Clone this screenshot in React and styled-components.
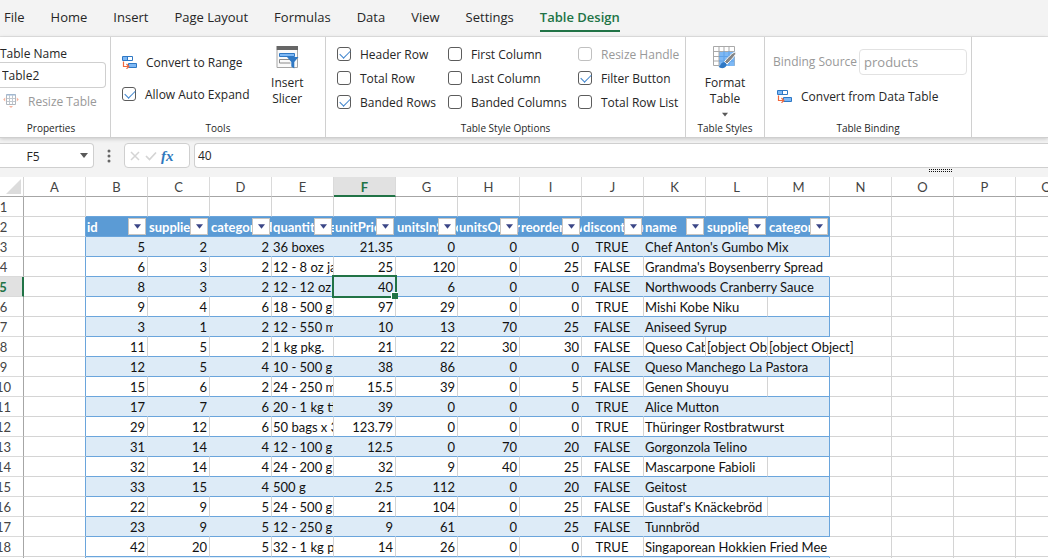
import styled, { createGlobalStyle, css } from "styled-components";

const GlobalStyle = createGlobalStyle`
  * {
    box-sizing: border-box;
  }
  body {
    margin: 0;
    overflow: hidden;
    color: #262626;
    background: #f3f3f3;
    font-family: "Open Sans", "Noto Sans", sans-serif;
    font-size: 12px;
  }
  button,
  input {
    margin: 0;
    color: inherit;
    font-family: inherit;
    font-size: inherit;
  }
`;

const Page = styled.div`
  display: flex;
  flex-direction: column;
  height: 100vh;
  overflow: hidden;
`;

const TabBar = styled.nav`
  display: flex;
  gap: 26px;
  height: 37px;
  padding: 4px 4px 0;
  border-bottom: 1px solid #e2e2e2;
`;

const Tab = styled.button`
  height: 28px;
  padding: 0;
  border: 0;
  border-bottom: 2px solid ${({ $active }) => ($active ? "#217346" : "transparent")};
  background: none;
  color: ${({ $active }) => ($active ? "#217346" : "#262626")};
  font-size: 13px;
  font-weight: ${({ $active }) => ($active ? 600 : 400)};
  line-height: 26px;
  white-space: nowrap;
`;

const Ribbon = styled.div`
  display: flex;
  flex: none;
  height: 101px;
  background: #fff;
  border-bottom: 1px solid #cfcfcf;
  box-shadow: 0 1px 4px rgba(0, 0, 0, 0.18);
`;

const Group = styled.section`
  display: flex;
  flex-direction: column;
  flex: none;
  width: ${({ $width }) => $width}px;
  border-right: 1px solid #d0d0d0;
`;

const GroupBody = styled.div`
  display: flex;
  flex: 1;
  justify-content: ${({ $center }) => ($center ? "center" : "flex-start")};
  padding: ${({ $pad }) => $pad || "0"};
`;

const GroupTitle = styled.h2`
  margin: 0;
  padding-right: ${({ $inset }) => $inset || 0}px;
  height: 17px;
  font-size: 10px;
  font-weight: 400;
  line-height: 16px;
  text-align: center;
`;

const Stack = styled.div`
  display: flex;
  flex-direction: column;
  gap: ${({ $gap }) => $gap || 0}px;
`;

const FieldLabel = styled.label`
  color: ${({ $disabled }) => ($disabled ? "#999" : "#262626")};
  line-height: 16px;
  white-space: nowrap;
`;

const TextBox = styled.input`
  width: ${({ $width }) => $width}px;
  height: 26px;
  padding: 0 4px;
  border: 1px solid #cfcfcf;
  border-radius: 4px;
  background: #fff;
  outline: none;
  font-size: 13px;

  &:disabled {
    border-color: #e2e2e2;
    color: #999;
  }
`;

const NameBox = styled(TextBox)`
  padding: 0 2px;
  border-left: 0;
  border-radius: 0 4px 4px 0;
  font-size: 12px;
`;

const Command = styled.button`
  display: flex;
  align-items: center;
  gap: 9px;
  height: 24px;
  padding: 0;
  border: 0;
  background: none;
  white-space: nowrap;

  &:disabled {
    color: #999;
  }
  &:disabled svg {
    opacity: 0.5;
  }
`;

const BigCommand = styled.button`
  display: flex;
  flex-direction: column;
  align-items: center;
  padding: 0;
  border: 0;
  background: none;
  line-height: 16px;

  svg {
    flex: none;
  }
  span {
    margin: 6px 0 5px;
  }
`;

const SourceRow = styled.div`
  display: flex;
  align-items: center;
  gap: 2px;
`;

const CheckGrid = styled.div`
  display: grid;
  grid-template-columns: 111px 130px auto;
  grid-auto-rows: 24px;
`;

const CheckLabel = styled.label`
  display: flex;
  align-items: center;
  gap: 9px;
  height: 24px;
  color: ${({ $disabled }) => ($disabled ? "#999" : "#262626")};
  white-space: nowrap;
`;

const CheckBox = styled.input`
  position: relative;
  flex: none;
  width: 14px;
  height: 14px;
  border: 1px solid #5c5c5c;
  border-radius: 3px;
  background: #fff;
  appearance: none;

  &:disabled {
    border-color: #c0c0c0;
  }
  &:checked::before {
    content: "";
    position: absolute;
    top: 2px;
    left: 2px;
    width: 9px;
    height: 5px;
    border: solid #3f84cc;
    border-width: 0 0 1px 1px;
    transform: rotate(-45deg);
  }
`;

const FormulaBar = styled.div`
  display: flex;
  flex: none;
  align-items: flex-start;
  height: 39px;
  padding-top: 5px;
`;

const AddressBox = styled.div`
  display: flex;
  align-items: center;
  width: 94px;
  height: 25px;
  padding-right: 5px;
  border: 1px solid #cfcfcf;
  border-left: 0;
  border-radius: 0 4px 4px 0;
  background: #fff;
`;

const AddressInput = styled.input`
  flex: 1;
  min-width: 0;
  padding: 2px 14px 0 0;
  border: 0;
  outline: none;
  background: none;
  text-align: center;
`;

const PlainButton = styled.button`
  display: flex;
  padding: 0;
  border: 0;
  background: none;
`;

const Dots = styled.div`
  display: flex;
  align-items: center;
  justify-content: center;
  width: 30px;
  height: 25px;
`;

const FormulaTools = styled.div`
  display: flex;
  align-items: center;
  gap: 4px;
  width: 66px;
  height: 25px;
  margin-right: 4px;
  padding-left: 5px;
  border: 1px solid #cfcfcf;
  border-radius: 4px;
  background: #fff;
`;

const FxButton = styled(PlainButton)`
  color: #2f78bd;
  font-family: "Liberation Serif", serif;
  font-size: 15px;
  font-style: italic;
  font-weight: 700;
  line-height: 20px;
`;

const FormulaColumn = styled.div`
  display: flex;
  flex: 1;
  flex-direction: column;
  min-width: 0;
`;

const FormulaInput = styled.input`
  width: 100%;
  height: 25px;
  padding: 0 3px;
  border: 1px solid #cfcfcf;
  border-right: 0;
  border-radius: 4px 0 0 4px;
  outline: none;
`;

const Grip = styled.div`
  align-self: flex-end;
  width: 24px;
  height: 4px;
  margin: 1px 95px 0 0;
  background-image: radial-gradient(circle at 0 0, #111 1px, transparent 1px);
  background-size: 2px 2px;
`;

const SheetArea = styled.main`
  flex: 1;
  min-height: 0;
  overflow: hidden;
  background: #fff;
`;

const Sheet = styled.table`
  width: 1094px;
  margin-left: -16px;
  border-collapse: separate;
  border-spacing: 0;
  table-layout: fixed;
  color: #111;
  font-family: Lato, sans-serif;
  font-size: 13px;
  line-height: 17px;
`;

const RowHead = styled.th`
  height: 20px;
  padding: 2px 0 0;
  border-right: 1px solid #a6a6a6;
  border-bottom: 1px solid #dadada;
  color: #444;
  font-weight: 400;
  text-align: center;

  ${({ $active }) =>
    $active &&
    css`
      border-right: 2px solid #217346;
      background: #e1e1e1;
      color: #217346;
      font-weight: 700;
    `}
`;

const Corner = styled.td`
  height: 20px;
  padding: 0 2px 0 0;
  border-right: 1px solid #d4d4d4;
  border-bottom: 1px solid #a6a6a6;

  svg {
    display: block;
    margin-left: auto;
  }
`;

const ColHead = styled.th`
  height: 20px;
  padding: 2px 0 0;
  border-right: 1px solid #dadada;
  border-bottom: 1px solid #a6a6a6;
  color: #444;
  font-weight: 400;

  ${({ $active }) =>
    $active &&
    css`
      border-bottom: 2px solid #217346;
      background: #e1e1e1;
      color: #217346;
      font-weight: 700;
      line-height: 16px;
    `}
`;

const Cell = styled.td`
  position: ${({ $selected }) => ($selected ? "relative" : "static")};
  height: 20px;
  padding: 2px 2px 0 1px;
  border-right: 1px solid ${({ $right }) => $right || "#d4d4d4"};
  border-bottom: 1px solid ${({ $bottom }) => $bottom || "#d4d4d4"};
  background: ${({ $band }) => ($band ? "#ddebf7" : "transparent")};
  text-align: ${({ $align }) => $align || "left"};
  white-space: nowrap;
  overflow: ${({ $clip }) => ($clip ? "hidden" : "visible")};
`;

const TableHead = styled.th`
  position: relative;
  height: 20px;
  padding: 2px 0 0 1px;
  border-bottom: 1px solid #6aa5dc;
  background: #5b9bd5;
  color: #fff;
  font-weight: 700;
  text-align: left;
  white-space: nowrap;
  overflow: hidden;
`;

const FilterButton = styled.button`
  position: absolute;
  top: 1px;
  right: 2px;
  display: flex;
  align-items: center;
  justify-content: center;
  width: 18px;
  height: 17px;
  padding: 0;
  border: 1px solid #c9c5c0;
  background: #fff;
`;

const Selection = styled.span`
  position: absolute;
  inset: -2px;
  border: 2px solid #217346;
  pointer-events: none;

  &::after {
    content: "";
    position: absolute;
    right: -3px;
    bottom: -3px;
    width: 6px;
    height: 6px;
    border: solid #fff;
    border-width: 1px 0 0 1px;
    background: #217346;
  }
`;

const ConvertIcon = () => (
  <svg width="15" height="13" viewBox="0 0 15 13" fill="none">
    <path d="M.5.5h10v4H.5z" fill="#fff" stroke="#2f78c4" />
    <path d="M1 1h4.5v3H1z" fill="#7db8f5" />
    <path d="M5.5.5v4" stroke="#2f78c4" />
    <path d="M6.5 7.5h8v4h-8z" fill="#7db8f5" stroke="#2f78c4" />
    <path d="M1.5 5.5v5h5M4.5 8l2.3 2.5-2.3 2.3" stroke="#f0683c" strokeWidth="1.2" />
  </svg>
);

const ResizeIcon = () => (
  <svg width="16" height="14" viewBox="0 0 16 14" fill="none">
    <path d="M3.5.5h9v10h-9z" stroke="#66717f" fill="#fff" />
    <path d="M3.5 1h9" stroke="#2f78c4" />
    <path d="M6.5 1v9M9.5 1v9M4 4.5h8M4 7.5h8" stroke="#8792a0" />
    <path d="M2.2 3.5v4L.2 5.5zM13.8 3.5v4l2-2zM6 12h4l-2 2z" fill="#f0683c" />
  </svg>
);

const SlicerIcon = () => (
  <svg width="23" height="23" viewBox="0 0 23 23" fill="none">
    <path d="M1 4v17.5h20.500V4" stroke="#a6a6a6" fill="#fafafa" />
    <path d="M.5 0h21.500v4H.5z" fill="#666" />
    <path d="M3.500 7.500h15v3h-15z" fill="#7db8f5" stroke="#2f78c4" />
    <path d="M18 13.500H3.500v3.500h11" stroke="#8a8a8a" />
    <path d="M11 11h11.500l-4.200 5v6.500l-3-2V16z" fill="#2f78c4" />
  </svg>
);

const FormatIcon = () => (
  <svg width="24" height="23" viewBox="0 0 24 23" fill="none">
    <path d="M.5.500h21v19H.5z" fill="#fff" stroke="#a9a9a9" />
    <path d="M6 5h15.500v15H6z" fill="#7db8f5" />
    <path d="M6 1v19M11 1v4M16 1v4M1 5.500h20M1 10.500h5M1 15h5" stroke="#a9a9a9" />
    <path d="M11 5v15M16 5v15M6 10.500h15M6 15h15" stroke="#5fa2e8" />
    <path d="M22.500 6.500c1.300 1-1.500 4.500-8.500 11.500l-2.500-2.300C17 9 21 5.500 22.500 6.500z" fill="#858585" stroke="#fff" />
    <path d="M5.500 20.500c2.500 0 2-4.500 5.300-4.200 2 .2 3.200 1.800 2.500 3.500-1 2.700-5.800 3.400-7.800.7z" fill="#2f78c4" />
  </svg>
);

const Arrow = ({ color = "#595959", width = 7 }) => (
  <svg width={width} height="5" viewBox="0 0 8 5" aria-hidden="true">
    <path d="M0 0h8L4 5z" fill={color} />
  </svg>
);

const tabs = [
  "File",
  "Home",
  "Insert",
  "Page Layout",
  "Formulas",
  "Data",
  "View",
  "Settings",
  "Table Design",
];

const styleOptions = [
  { label: "Header Row", checked: true },
  { label: "First Column" },
  { label: "Resize Handle", disabled: true },
  { label: "Total Row" },
  { label: "Last Column" },
  { label: "Filter Button", checked: true },
  { label: "Banded Rows", checked: true },
  { label: "Banded Columns" },
  { label: "Total Row List" },
];

const letters = "ABCDEFGHIJKLMNOPQ".split("");

const fields = [
  "id",
  "supplierId",
  "categoryId",
  "quantityPerUnit",
  "unitPrice",
  "unitsInStock",
  "unitsOnOrder",
  "reorderLevel",
  "discontinued",
  "name",
  "supplier",
  "category",
];

// span is how many columns the name runs over, open drops the table's right edge
const products = [
  { values: [5, 2, 2, "36 boxes", 21.35, 0, 0, 0, "TRUE"], name: "Chef Anton's Gumbo Mix", span: 3 },
  { values: [6, 3, 2, "12 - 8 oz jars", 25, 120, 0, 25, "FALSE"], name: "Grandma's Boysenberry Spread", span: 3, open: true },
  { values: [8, 3, 2, "12 - 12 oz jars", 40, 6, 0, 0, "FALSE"], name: "Northwoods Cranberry Sauce", span: 3 },
  { values: [9, 4, 6, "18 - 500 g pkgs.", 97, 29, 0, 0, "TRUE"], name: "Mishi Kobe Niku", span: 2 },
  { values: [3, 1, 2, "12 - 550 ml bottles", 10, 13, 70, 25, "FALSE"], name: "Aniseed Syrup", span: 3 },
  { values: [11, 5, 2, "1 kg pkg.", 21, 22, 30, 30, "FALSE"], name: "Queso Cabrales", span: 1, extra: ["[object Object]", "[object Object]"], open: true },
  { values: [12, 5, 4, "10 - 500 g pkgs.", 38, 86, 0, 0, "FALSE"], name: "Queso Manchego La Pastora", span: 3 },
  { values: [15, 6, 2, "24 - 250 ml bottles", 15.5, 39, 0, 5, "FALSE"], name: "Genen Shouyu", span: 2 },
  { values: [17, 7, 6, "20 - 1 kg tins", 39, 0, 0, 0, "TRUE"], name: "Alice Mutton", span: 3 },
  { values: [29, 12, 6, "50 bags x 30 sausgs.", 123.79, 0, 0, 0, "TRUE"], name: "Thüringer Rostbratwurst", span: 3 },
  { values: [31, 14, 4, "12 - 100 g pkgs", 12.5, 0, 70, 20, "FALSE"], name: "Gorgonzola Telino", span: 3 },
  { values: [32, 14, 4, "24 - 200 g pkgs.", 32, 9, 40, 25, "FALSE"], name: "Mascarpone Fabioli", span: 2 },
  { values: [33, 15, 4, "500 g", 2.5, 112, 0, 20, "FALSE"], name: "Geitost", span: 3 },
  { values: [22, 9, 5, "24 - 500 g pkgs.", 21, 104, 0, 25, "FALSE"], name: "Gustaf's Knäckebröd", span: 2 },
  { values: [23, 9, 5, "12 - 250 g pkgs.", 9, 61, 0, 25, "FALSE"], name: "Tunnbröd", span: 3 },
  { values: [42, 20, 5, "32 - 1 kg pkgs.", 14, 26, 0, 0, "TRUE"], name: "Singaporean Hokkien Fried Mee", span: 3, open: true },
];

const line = "#6aa5dc";

const alignOf = (index) => {
  if (index === 3) return "left";
  if (index === 8) return "center";
  return "right";
};

const Check = ({ label, checked, disabled }) => (
  <CheckLabel $disabled={disabled}>
    <CheckBox type="checkbox" defaultChecked={checked} disabled={disabled} />
    {label}
  </CheckLabel>
);

const BlankCells = ({ count }) =>
  Array.from({ length: count }, (_, i) => <Cell key={i} />);

const ProductRow = ({ product, row }) => {
  const band = row % 2 === 1;
  const inner = band ? "#ddebf7" : "#d4d4d4";
  const edge = product.open ? "transparent" : line;
  const rest = product.extra || Array(3 - product.span).fill("");

  return (
    <tr>
      <RowHead scope="row" $active={row === 5}>
        {row}
      </RowHead>
      <Cell $right={line} />
      {product.values.map((value, i) => (
        <Cell
          key={i}
          $band={band}
          $right={inner}
          $bottom={line}
          $align={alignOf(i)}
          $clip={i === 3}
          $selected={row === 5 && i === 4}
        >
          {value}
          {row === 5 && i === 4 && <Selection />}
        </Cell>
      ))}
      <Cell
        colSpan={product.span}
        $band={band}
        $bottom={line}
        $right={product.span === 3 ? edge : inner}
        $clip={product.span === 1}
      >
        {product.name}
      </Cell>
      {rest.map((text, i) => (
        <Cell
          key={i}
          $bottom={line}
          $right={i === rest.length - 1 ? edge : inner}
          $clip={i < rest.length - 1}
        >
          {text}
        </Cell>
      ))}
      <BlankCells count={4} />
    </tr>
  );
};

const RibbonBar = () => (
  <Ribbon>
    <Group $width={111}>
      <GroupBody $pad="9px 0 0">
        <Stack>
          <FieldLabel htmlFor="tableName">Table Name</FieldLabel>
          <NameBox id="tableName" $width={106} defaultValue="Table2" />
          <GroupBody $pad="1px 0 0 3px">
            <Command disabled>
              <ResizeIcon />
              Resize Table
            </Command>
          </GroupBody>
        </Stack>
      </GroupBody>
      <GroupTitle $inset={8}>Properties</GroupTitle>
    </Group>
    <Group $width={215}>
      <GroupBody $pad="9px 0 0 11px">
        <GroupBody $pad="4px 0 0">
          <Stack $gap={8}>
            <Command>
              <ConvertIcon />
              Convert to Range
            </Command>
            <Check label="Allow Auto Expand" checked />
          </Stack>
        </GroupBody>
        <GroupBody $center>
          <BigCommand>
            <SlicerIcon />
            <span>
              Insert
              <br />
              Slicer
            </span>
          </BigCommand>
        </GroupBody>
      </GroupBody>
      <GroupTitle>Tools</GroupTitle>
    </Group>
    <Group $width={360}>
      <GroupBody $pad="5px 0 0 11px">
        <CheckGrid>
          {styleOptions.map((option) => (
            <Check key={option.label} {...option} />
          ))}
        </CheckGrid>
      </GroupBody>
      <GroupTitle>Table Style Options</GroupTitle>
    </Group>
    <Group $width={79}>
      <GroupBody $center $pad="9px 0 0">
        <BigCommand>
          <FormatIcon />
          <span>
            Format
            <br />
            Table
          </span>
          <Arrow width={6} />
        </BigCommand>
      </GroupBody>
      <GroupTitle>Table Styles</GroupTitle>
    </Group>
    <Group $width={207}>
      <GroupBody $pad="12px 0 0 8px">
        <Stack $gap={9}>
          <SourceRow>
            <FieldLabel htmlFor="bindingSource" $disabled>
              Binding Source
            </FieldLabel>
            <TextBox id="bindingSource" $width={108} defaultValue="products" disabled />
          </SourceRow>
          <GroupBody $pad="0 0 0 4px">
            <Command>
              <ConvertIcon />
              Convert from Data Table
            </Command>
          </GroupBody>
        </Stack>
      </GroupBody>
      <GroupTitle>Table Binding</GroupTitle>
    </Group>
  </Ribbon>
);

const App = () => {
  return (
    <>
      <GlobalStyle />
      <Page>
        <TabBar>
          {tabs.map((tab) => (
            <Tab key={tab} $active={tab === "Table Design"}>
              {tab}
            </Tab>
          ))}
        </TabBar>
        <RibbonBar />
        <FormulaBar>
          <AddressBox>
            <AddressInput aria-label="Name box" defaultValue="F5" />
            <PlainButton aria-label="Open name list">
              <Arrow width={8} />
            </PlainButton>
          </AddressBox>
          <Dots>
            <svg width="4" height="14" viewBox="0 0 4 14" fill="#666">
              <circle cx="2" cy="2" r="1.500" />
              <circle cx="2" cy="7" r="1.500" />
              <circle cx="2" cy="12" r="1.500" />
            </svg>
          </Dots>
          <FormulaTools>
            <PlainButton aria-label="Cancel">
              <svg width="11" height="10" viewBox="0 0 11 10" stroke="#d4d4d4" strokeWidth="1.500">
                <path d="M1 1l8 8M9 1L1 9" />
              </svg>
            </PlainButton>
            <PlainButton aria-label="Enter">
              <svg width="12" height="10" viewBox="0 0 12 10" fill="none" stroke="#d4d4d4" strokeWidth="1.700">
                <path d="M1 5l3.500 3.500L11 1.500" />
              </svg>
            </PlainButton>
            <FxButton>fx</FxButton>
          </FormulaTools>
          <FormulaColumn>
            <FormulaInput aria-label="Formula" defaultValue="40" />
            <Grip />
          </FormulaColumn>
        </FormulaBar>
        <SheetArea>
          <Sheet>
            <colgroup>
              <col width="40" />
              {letters.map((letter) => (
                <col key={letter} width="62" />
              ))}
            </colgroup>
            <thead>
              <tr>
                <Corner>
                  <svg width="15" height="15" viewBox="0 0 15 15">
                    <path d="M15 0v15H0z" fill="#dcdcdc" />
                  </svg>
                </Corner>
                {letters.map((letter) => (
                  <ColHead key={letter} scope="col" $active={letter === "F"}>
                    {letter}
                  </ColHead>
                ))}
              </tr>
            </thead>
            <tbody>
              <tr>
                <RowHead scope="row">1</RowHead>
                {letters.map((letter, i) => (
                  <Cell key={letter} $bottom={i > 0 && i < 13 ? line : undefined} />
                ))}
              </tr>
              <tr>
                <RowHead scope="row">2</RowHead>
                <Cell $right={line} />
                {fields.map((field) => (
                  <TableHead key={field} scope="col">
                    {field}
                    <FilterButton aria-label={`Filter ${field}`}>
                      <Arrow color="#3b4687" width={7} />
                    </FilterButton>
                  </TableHead>
                ))}
                <BlankCells count={4} />
              </tr>
              {products.map((product, i) => (
                <ProductRow key={product.name} product={product} row={i + 3} />
              ))}
              <tr>
                <RowHead />
                <Cell $right={line} />
                <Cell colSpan={12} $band $right={line} $bottom={line} />
                <BlankCells count={4} />
              </tr>
            </tbody>
          </Sheet>
        </SheetArea>
      </Page>
    </>
  );
};

export default App;
